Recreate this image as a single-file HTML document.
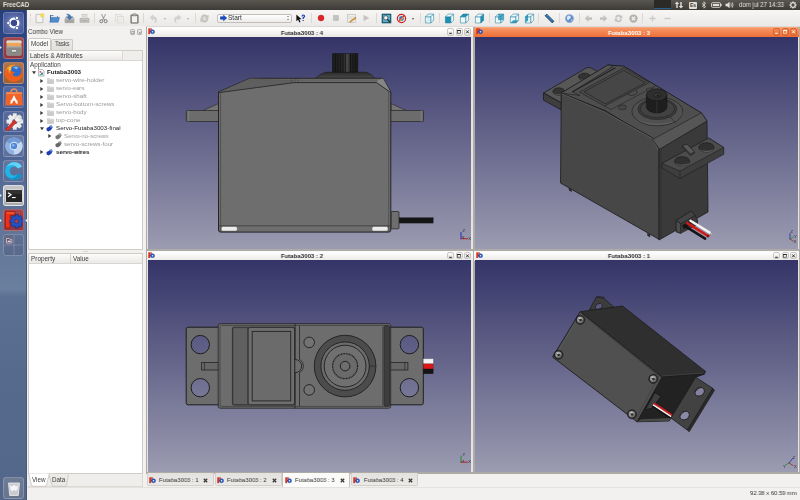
<!DOCTYPE html>
<html><head><meta charset="utf-8"><title>FreeCAD</title>
<style>
*{box-sizing:border-box;margin:0;padding:0}
html,body{width:800px;height:500px;overflow:hidden;background:#f2f1f0;font-family:"Liberation Sans","DejaVu Sans",sans-serif;font-size:7px;color:#3c3c3c}
.a{position:absolute}
.t{position:absolute;white-space:nowrap;will-change:transform;line-height:8px;height:8px;font-size:6.9px;transform-origin:0 50%}
#topbar{left:0;top:0;width:800px;height:10px;background:linear-gradient(#59574f,#3c3b37)}
#launcher{left:0;top:10px;width:27px;height:490px;background:linear-gradient(#233f7c 0%,#2f4b88 10%,#486093 25%,#5c7198 40%,#65799b 50%,#6a7e9e 57%,#5c7093 58.500%,#566a8d 75%,#53678a 100%);border-right:1px solid #4a5877}
#toolbar{left:27px;top:10px;width:773px;height:16px;background:linear-gradient(#f7f6f5,#ebe9e7)}
.li{position:absolute;left:2.5px;width:21.5px;height:21.5px;border-radius:3px;border:1px solid rgba(255,255,255,.2);overflow:hidden}
.sep{position:absolute;top:13px;width:1px;height:10px;background:#dcd9d5}
.tb{position:absolute;height:10px;background:linear-gradient(#ffffff,#eae8e6);font-weight:bold;font-size:6.4px;line-height:10px;color:#2c2c2c;border-top:1px solid #fafafa}
.tb span{will-change:transform}
.tb.act{background:linear-gradient(#f79766,#ee6e36);color:#fff;border-top:1px solid #f9a77c;border-radius:2px 2px 0 0}
.win{position:absolute;background:#e6e4e1;border:1px solid #aeaba6}
.view{position:absolute;background:linear-gradient(#343468,#9b9bb1)}
.wb{position:absolute;top:0.300px;width:7px;height:7.5px;border:1px solid #c9c6c2;border-radius:2px;background:linear-gradient(#fdfdfd,#e4e2df)}
.act .wb{border-color:#d9652f;background:linear-gradient(#f38a57,#ea6c35)}
</style></head><body>

<div id="topbar" class="a">
<span class="t" style="left:2.80px;top:0.80px;font-size:6.6px;color:#e6e2d9;font-weight:bold;transform:scaleX(0.9277);">FreeCAD</span>
<div class="a" style="left:654px;top:0;width:17px;height:9px;background:#2b2a27;border-bottom:1px solid #2b5f8f"></div>
<svg class="a" style="left:674px;top:1px" width="10" height="8" viewBox="0 0 10 8"><path d="M3 0.5 L0.8 3 H2.3 V7 H3.7 V3 H5.2Z M7 7.5 L4.8 5 H6.3 V1 H7.7 V5 H9.2Z" fill="#e3dfd6"/></svg>
<div class="a" style="left:689px;top:1.5px;width:8px;height:7px;background:#e3dfd6;border-radius:1px;color:#3c3b37;font-size:5px;line-height:7px;text-align:center;font-weight:bold">Es</div>
<svg class="a" style="left:701px;top:1px" width="6" height="8" viewBox="0 0 6 8"><path d="M1 2.3 L4.6 5.6 L3 7.2 V0.8 L4.6 2.4 L1 5.7" fill="none" stroke="#e3dfd6" stroke-width="0.8"/></svg>
<svg class="a" style="left:711px;top:2px" width="11" height="6" viewBox="0 0 11 6"><rect x="0.5" y="0.7" width="9" height="4.6" rx="1" fill="none" stroke="#e3dfd6" stroke-width="0.9"/><rect x="1.8" y="2" width="6.4" height="2" fill="#e3dfd6"/><rect x="9.6" y="2" width="1" height="2" fill="#e3dfd6"/></svg>
<svg class="a" style="left:725px;top:1px" width="10" height="8" viewBox="0 0 10 8"><path d="M0.5 2.8 H2.2 L4.6 0.8 V7.2 L2.2 5.2 H0.5Z" fill="#e3dfd6"/><path d="M5.8 2.3 Q7 4 5.8 5.7 M7.2 1.3 Q9 4 7.2 6.7" fill="none" stroke="#e3dfd6" stroke-width="0.8"/></svg>
<span class="t" style="left:739.00px;top:0.80px;font-size:6.3px;color:#e6e2d9;transform:scaleX(0.9660);">dom jul 27 14:33</span>
<svg class="a" style="left:789px;top:1px" width="8" height="8" viewBox="0 0 8 8"><circle cx="4" cy="4" r="2.3" fill="none" stroke="#e3dfd6" stroke-width="1.3"/><path d="M4 0.3V1.6M4 6.4V7.7M0.3 4H1.6M6.4 4H7.7M1.4 1.4L2.3 2.3M5.7 5.7L6.6 6.6M1.4 6.6L2.3 5.7M5.7 2.3L6.6 1.4" stroke="#e3dfd6" stroke-width="1"/></svg>
</div>
<div id="launcher" class="a">
<div class="li" style="top:2px;background:radial-gradient(circle at 50% 50%,#8494c4,#5466a4 60%,#43549a);"><svg width="20" height="20" viewBox="0 0 20 20"><circle cx="10" cy="10" r="4.300" fill="#39498c" stroke="#fff" stroke-width="2.300"/><g fill="#fff" stroke="#4a5b9e" stroke-width=".8"><circle cx="4.300" cy="10" r="1.700"/><circle cx="12.900" cy="5" r="1.700"/><circle cx="12.900" cy="15" r="1.700"/></g></svg></div>
<div class="li" style="top:27px;background:linear-gradient(#a4474f,#8c3741);"><svg width="20" height="20" viewBox="0 0 20 20"><rect x="2.500" y="2.500" width="15" height="15" rx="1.500" fill="#a9a8a4"/><rect x="2.500" y="2.500" width="15" height="3" rx="1" fill="#dedcd7"/><rect x="3.500" y="4.800" width="13" height="3.600" fill="#f3a356"/><rect x="2.500" y="8.400" width="15" height="9.100" rx="1" fill="#8b8a86"/><rect x="2.500" y="8.400" width="15" height="1" fill="#b5b4b0"/><rect x="7.300" y="11.600" width="5.400" height="2.400" rx="1.100" fill="#ececec" stroke="#5c5c5c" stroke-width=".6"/></svg></div>
<div class="li" style="top:52px;background:linear-gradient(#b0774a,#9c6038);"><svg width="20" height="20" viewBox="0 0 20 20"><defs><radialGradient id="fx" cx=".35" cy=".3" r=".8"><stop offset="0" stop-color="#f7b733"/><stop offset=".6" stop-color="#ea6a1c"/><stop offset="1" stop-color="#d9411a"/></radialGradient></defs><circle cx="9.800" cy="10.200" r="8.800" fill="url(#fx)"/><circle cx="11.800" cy="8" r="5.600" fill="#2c6ccf"/><path d="M9 4 Q12 2.600 15 4.500 Q13 5 12.500 6.500 Q10.500 5 9 4Z" fill="#7fb4ee"/><path d="M1.200 9 Q1.500 15.500 7 18.200 Q13 20 17 15.500 Q18.800 13 18.500 9.500 Q17.500 13.500 13 14 Q9 14 8.500 10.500 Q10.500 10.500 11 9 Q8 9.500 7 7 Q5.500 8.500 5.800 11 Q4 9 4.500 5.500 Q2 6.500 1.200 9Z" fill="#ee5f1c"/><path d="M4.500 5.500 Q5 8.500 7 7 Q8 5 6.800 3.200 Q5.300 4 4.500 5.500Z" fill="#f8c43a"/></svg></div>
<div class="li" style="top:76px;background:linear-gradient(#4f69a0,#46609a);"><svg width="20" height="20" viewBox="0 0 20 20"><path d="M7 5.500 Q7 2 10 2 Q13 2 13 5.500" fill="none" stroke="#f08a55" stroke-width="1.400"/><path d="M2 5.300 H18 L18.800 18.500 H1.200Z" fill="#f0642a"/><path d="M2 5.300 H18 L18.100 7 H1.900Z" fill="#f58a55"/><path d="M10 8 L6 16.500 H8 L10 12.200 L12 16.500 H14Z" fill="#fff"/><path d="M6.500 14.300 L10 12.800 L13.500 14.300" fill="none" stroke="#fff" stroke-width="1.100"/></svg></div>
<div class="li" style="top:100.5px;background:linear-gradient(#5a6c9c,#506294);"><svg width="20" height="20" viewBox="0 0 20 20"><g transform="translate(10.800 9.500)"><g fill="#e9e9e9"><rect x="-1.900" y="-8.300" width="3.800" height="16.600" rx=".6"/><rect x="-1.900" y="-8.300" width="3.800" height="16.600" rx=".6" transform="rotate(45)"/><rect x="-1.900" y="-8.300" width="3.800" height="16.600" rx=".6" transform="rotate(90)"/><rect x="-1.900" y="-8.300" width="3.800" height="16.600" rx=".6" transform="rotate(135)"/></g><circle r="6.300" fill="#ececec"/><circle r="2.600" fill="#5b6c9c"/></g><path d="M1.500 17.200 L10.500 7.800 L12.800 10 L3.800 19.300 Q2 19.800 1.500 17.200Z" fill="#d8332a" stroke="#8f1d18" stroke-width=".4"/><path d="M10.500 7.800 L12.500 4 Q14 2.500 16 3 L14.300 5.500 L15.800 7 L18 5.500 Q18.500 8 16.800 9.200 L12.800 10Z" fill="#f1f1f1" stroke="#9a9a9a" stroke-width=".4"/></svg></div>
<div class="li" style="top:125px;background:linear-gradient(#6b7ba6,#5f6f9b);"><svg width="20" height="20" viewBox="0 0 20 20"><circle cx="10" cy="10" r="8.600" fill="#a9c4e8"/><path d="M10 10 L2.600 5.700 A8.600 8.600 0 0 1 17.400 5.700Z" fill="#6f9bd8"/><path d="M10 10 L17.400 5.700 A8.600 8.600 0 0 1 10 18.600Z" fill="#c4d7f0"/><path d="M10 10 L10 18.600 A8.600 8.600 0 0 1 2.600 5.700Z" fill="#8fb2e2"/><circle cx="10" cy="10" r="4.300" fill="#e4edf8"/><circle cx="10" cy="10" r="3.300" fill="#4f86d6"/><circle cx="9.200" cy="9.200" r="1.300" fill="#8db4ea"/></svg></div>
<div class="li" style="top:150px;background:linear-gradient(#64769f,#596b95);"><svg width="20" height="20" viewBox="0 0 20 20"><path d="M18 5.500 A9 9 0 1 0 18 14.500 L14 12.500 A4.500 4.500 0 1 1 14 7.500Z" fill="#1fb4ea"/><path d="M18 5.500 A9 9 0 0 0 2.500 6 Q9 1.500 14 7.500Z" fill="#63d2f6"/><path d="M18 14.500 A9 9 0 0 1 3 15.500 Q10 20 14 12.500Z" fill="#1690c4"/></svg></div>
<div class="li" style="top:174.5px;background:linear-gradient(#c4c5c6,#a8a9aa);border-color:rgba(255,255,255,.6)"><svg width="20" height="20" viewBox="0 0 20 20"><rect x="1.500" y="3.500" width="17" height="13" rx="1.200" fill="#232323" stroke="#e4e4e4" stroke-width=".9"/><rect x="2" y="4" width="16" height="4" fill="#3a3a3a" opacity=".6"/><path d="M4 6.800 L7 8.800 L4 10.800" fill="none" stroke="#fff" stroke-width="1.200"/><rect x="8" y="11" width="3.600" height="1.100" fill="#fff"/></svg></div>
<div class="li" style="top:199px;background:linear-gradient(#a8434c,#903741);"><svg width="20" height="20" viewBox="0 0 20 20"><path d="M1.500 1.500 H11 V5.500 H6 V8 H10 V12 H6 V18 H1.500Z" fill="#ee3018" stroke="#7f170d" stroke-width=".6"/><path d="M2.300 2.300 H10.200 V3.500 H2.300Z" fill="#f8703a" opacity=".8"/><g transform="translate(12.600 11.300)"><g fill="#2052c8" stroke="#0d2a78" stroke-width=".6"><rect x="-1.500" y="-6.700" width="3" height="13.400"/><rect x="-1.500" y="-6.700" width="3" height="13.400" transform="rotate(45)"/><rect x="-1.500" y="-6.700" width="3" height="13.400" transform="rotate(90)"/><rect x="-1.500" y="-6.700" width="3" height="13.400" transform="rotate(135)"/></g><circle r="4.900" fill="#2052c8"/><circle r="2.200" fill="#a2414c" stroke="#0d2a78" stroke-width=".5"/></g></svg></div>
<div class="li" style="top:224px;background:linear-gradient(#5e6f93,#58698c);border-color:rgba(255,255,255,.22)"><svg width="20" height="20" viewBox="0 0 20 20"><rect x="0" y="0" width="10" height="10" fill="#6b6480" opacity=".55"/><path d="M10 0V20M0 10H20" stroke="rgba(255,255,255,.28)" stroke-width=".7"/><path d="M2.500 3.500 H5 L5.600 4.300 H7.800 V8 H2.500Z" fill="#5c4a5e" stroke="#e4dfe2" stroke-width=".7"/><rect x="3.600" y="5.600" width="3.200" height="1.400" fill="#e4dfe2"/></svg></div>
<div class="li" style="top:467px;background:linear-gradient(#6f7c95,#67748d);border-color:rgba(255,255,255,.2)"><svg width="20" height="20" viewBox="0 0 20 20"><path d="M4.5 5 H15.500 L14.300 17.500 H5.700Z" fill="#c9cbd0" stroke="#eef0f3" stroke-width=".8"/><path d="M6 7 l2 1.500 2-2 2 2 2-1.500 -.5 4 -1.500 2 -2-1 -2 1.500 -1.500-2Z" fill="#f4f5f7"/></svg></div>
<svg class="a" style="left:0;top:36.0px" width="2" height="3" viewBox="0 0 2 3"><path d="M0 0L1.800 1.500L0 3Z" fill="#e6e9f2"/></svg>
<svg class="a" style="left:0;top:61.0px" width="2" height="3" viewBox="0 0 2 3"><path d="M0 0L1.800 1.500L0 3Z" fill="#e6e9f2"/></svg>
<svg class="a" style="left:0;top:183.5px" width="2" height="3" viewBox="0 0 2 3"><path d="M0 0L1.800 1.500L0 3Z" fill="#e6e9f2"/></svg>
<svg class="a" style="left:0;top:208.5px" width="2" height="3" viewBox="0 0 2 3"><path d="M0 0L1.800 1.500L0 3Z" fill="#e6e9f2"/></svg>
<svg class="a" style="left:24.500px;top:208.500px" width="2" height="3" viewBox="0 0 2 3"><path d="M2 0L0.200 1.500L2 3Z" fill="#e6e9f2"/></svg>
</div>
<div id="toolbar" class="a"></div>
<div class="a" style="left:29.500px;top:14px;width:1px;height:8px;border-left:1px dotted #d6d3cf"></div>
<svg class="a" style="left:34.0px;top:12.5px" width="11" height="11" viewBox="0 0 16 16"><path d="M3 2 H11 L13 4 V14 H3Z" fill="#f4f3f0" stroke="#a9a7a2" stroke-width=".9"/><circle cx="12" cy="3.500" r="2.600" fill="#f5e34a" stroke="#d9c02a" stroke-width=".5"/></svg>
<svg class="a" style="left:48.5px;top:12.5px" width="11" height="11" viewBox="0 0 16 16"><path d="M1.500 3 H6 L7 4.500 H13 V13 H1.500Z" fill="#3f6ea8"/><path d="M3 4 H12 V8 H3Z" fill="#e9e9e6"/><path d="M1 13.500 L3 6.500 H15.500 L13.300 13.500Z" fill="#4f8bd0" stroke="#2d5d9c" stroke-width=".6"/></svg>
<svg class="a" style="left:63.5px;top:12.5px" width="11" height="11" viewBox="0 0 16 16"><path d="M1.500 9 L3.500 5 H12.500 L14.500 9 V14 H1.500Z" fill="#bdbcb8" stroke="#8a8985" stroke-width=".8"/><rect x="2.500" y="10" width="11" height="3" fill="#a3a29e"/><path d="M8 10 L4.500 6.200 H6.800 Q6.800 2.500 3.500 1.800 Q10 0.800 9.800 6.200 H11.800Z" fill="#3d78c4" stroke="#235a9e" stroke-width=".5"/></svg>
<svg class="a" style="left:78.5px;top:12.5px" width="11" height="11" viewBox="0 0 16 16"><path d="M1.500 8 H14.500 V13.500 H1.500Z" fill="#c9c8c4" stroke="#9b9a96" stroke-width=".8"/><rect x="4.500" y="2.500" width="7" height="5.500" fill="#f3f2ef" stroke="#a9a7a2" stroke-width=".7"/><path d="M6 4.300H10M6 6H10" stroke="#a9a7a2" stroke-width=".7"/><rect x="3.500" y="10.500" width="9" height="1.500" fill="#a9a8a4"/></svg>
<div class="sep" style="left:94px"></div>
<svg class="a" style="left:97.5px;top:12.5px" width="11" height="11" viewBox="0 0 16 16"><path d="M5 1.500 L9.500 10.500 M11 1.500 L6.500 10.500" stroke="#8a8a86" stroke-width="1.300"/><circle cx="4.800" cy="12" r="2.200" fill="none" stroke="#6f6f6b" stroke-width="1.300"/><circle cx="11.200" cy="12" r="2.200" fill="none" stroke="#6f6f6b" stroke-width="1.300"/></svg>
<svg class="a" style="left:113.5px;top:12.5px" width="11" height="11" viewBox="0 0 16 16"><rect x="2.500" y="2" width="8" height="9.500" fill="#f1f0ee" stroke="#d2d0cc" stroke-width=".8"/><rect x="5.500" y="5" width="8" height="9.500" fill="#f3f2f0" stroke="#cfcdc9" stroke-width=".8"/><path d="M7 8H12M7 10H12M7 12H11" stroke="#dcdad6" stroke-width=".7"/></svg>
<svg class="a" style="left:128.5px;top:12.5px" width="11" height="11" viewBox="0 0 16 16"><rect x="2.500" y="2.500" width="11" height="12.500" rx="1" fill="#8d8b86" stroke="#6d6b67" stroke-width=".8"/><rect x="4.200" y="4.500" width="7.600" height="9" fill="#f2f1ee"/><rect x="5.500" y="1" width="5" height="3" rx=".8" fill="#b9b7b2" stroke="#6d6b67" stroke-width=".6"/></svg>
<div class="sep" style="left:143px"></div>
<svg class="a" style="left:147.5px;top:12.5px" width="11" height="11" viewBox="0 0 16 16"><path d="M3 6.500 L7 2.500 V5 Q12.500 5 12.500 10 Q12.500 13 9.500 14 Q11 12 10.500 10 Q10 8 7 8 V10.500Z" fill="#d4d2ce" stroke="#c3c1bc" stroke-width=".6"/></svg>
<div class="a" style="left:163.500px;top:17.500px;border:1.600px solid transparent;border-top:2px solid #b0aea9"></div>
<svg class="a" style="left:171.5px;top:12.5px" width="11" height="11" viewBox="0 0 16 16"><path d="M13 6.500 L9 2.500 V5 Q3.500 5 3.500 10 Q3.500 13 6.500 14 Q5 12 5.500 10 Q6 8 9 8 V10.500Z" fill="#d4d2ce" stroke="#c3c1bc" stroke-width=".6"/></svg>
<div class="a" style="left:186.500px;top:17.500px;border:1.600px solid transparent;border-top:2px solid #b0aea9"></div>
<div class="sep" style="left:194.5px"></div>
<svg class="a" style="left:199.0px;top:12.5px" width="11" height="11" viewBox="0 0 16 16"><path d="M3 7 A5 5 0 0 1 12 4.500 L13.500 3 V8 H8.500 L10.300 6.200 A2.800 2.800 0 0 0 5.400 7Z M13 9 A5 5 0 0 1 4 11.500 L2.500 13 V8 H7.500 L5.700 9.800 A2.800 2.800 0 0 0 10.600 9Z" fill="#c9c7c3" stroke="#b1afaa" stroke-width=".5"/></svg>
<div class="a" style="left:217px;top:13.500px;width:75px;height:9.500px;border:1px solid #c2bfba;border-radius:2px;background:linear-gradient(#ffffff,#ecebe9)"></div>
<svg class="a" style="left:219.500px;top:15px" width="7" height="6" viewBox="0 0 7 6"><path d="M0.300 1.800 H3.500 V0.200 L6.800 3 L3.500 5.800 V4.200 H0.300Z" fill="#1c4fd0" stroke="#0b2c86" stroke-width=".5"/></svg>
<span class="t" style="left:227.50px;top:14.30px;font-size:6.3px;color:#2f2f2f;transform:scaleX(1.0372);">Start</span>
<div class="a" style="left:287px;top:15.300px;border:1.400px solid transparent;border-bottom:1.800px solid #444"></div>
<div class="a" style="left:287px;top:19.200px;border:1.400px solid transparent;border-top:1.800px solid #444"></div>
<svg class="a" style="left:295.0px;top:12.5px" width="11" height="11" viewBox="0 0 16 16"><path d="M2 2 L2 12 L4.500 9.800 L6.300 13.800 L8 13 L6.200 9.200 L9.500 9Z" fill="#111"/><path d="M9.500 5 Q9.500 2 12 2 Q14.800 2 14.800 4.600 Q14.800 6.300 12.800 7.200 V8.800 H11 V6.300 Q12.800 5.800 12.800 4.600 Q12.800 3.800 12 3.800 Q11.300 3.800 11.300 5Z M11 10 h1.800 v1.800 h-1.800Z" fill="#1d3fb8"/></svg>
<div class="sep" style="left:311px"></div>
<svg class="a" style="left:316.0px;top:13.0px" width="10" height="10" viewBox="0 0 16 16"><circle cx="8" cy="8" r="4.800" fill="#e02424" stroke="#b51515" stroke-width=".6"/></svg>
<svg class="a" style="left:331.0px;top:13.0px" width="10" height="10" viewBox="0 0 16 16"><rect x="3.800" y="3.800" width="8.400" height="8.400" fill="#c4c2be" stroke="#b2b0ab" stroke-width=".6"/></svg>
<svg class="a" style="left:345.5px;top:12.5px" width="11" height="11" viewBox="0 0 16 16"><rect x="2" y="2.500" width="12" height="11.500" fill="#f0efec" stroke="#b4b2ad" stroke-width=".8"/><path d="M3.500 5.500H12M3.500 8H9" stroke="#c9c7c2" stroke-width=".8"/><path d="M5 12.500 L13.500 6 L14.800 7.600 L6.400 13.600Z" fill="#e0a030" stroke="#8b5e1a" stroke-width=".5"/></svg>
<svg class="a" style="left:361.0px;top:13.0px" width="10" height="10" viewBox="0 0 16 16"><path d="M4.500 3.500 L12.500 8 L4.500 12.500Z" fill="#c6c4c0" stroke="#b4b2ad" stroke-width=".5"/></svg>
<div class="sep" style="left:376px"></div>
<svg class="a" style="left:380.5px;top:12.5px" width="11" height="11" viewBox="0 0 16 16"><rect x="1.500" y="1.500" width="13" height="13" fill="#1f6f8c" stroke="#0e4558" stroke-width=".9"/><rect x="3" y="3" width="10" height="10" fill="#5fb3cf"/><circle cx="7" cy="7" r="3.200" fill="#e8f4f8" stroke="#333" stroke-width="1"/><path d="M9.300 9.300 L13 13" stroke="#222" stroke-width="1.800"/></svg>
<svg class="a" style="left:395.5px;top:12.5px" width="11" height="11" viewBox="0 0 16 16"><circle cx="8" cy="8" r="6" fill="#ececec" stroke="#d32020" stroke-width="1.800"/><circle cx="8" cy="8" r="3.600" fill="#3a7bd0"/><path d="M3.500 12.500 L12.500 3.500" stroke="#d32020" stroke-width="1.800"/><path d="M5 11 L10.500 5.500 L11.500 6.500 L6 12Z" fill="#e9b93a"/></svg>
<div class="a" style="left:411.500px;top:17.500px;border:1.600px solid transparent;border-top:2px solid #555"></div>
<div class="sep" style="left:420px"></div>
<svg class="a" style="left:423.5px;top:12.5px" width="11" height="11" viewBox="0 0 16 16"><path d="M2 5.500 L10 5.500 L10 14.500 L2 14.500Z" fill="#eef8fb" stroke="#1d7f9c" stroke-width=".8"/><path d="M2 5.500 L6 1.500 L14 1.500 L10 5.500Z" fill="#eef8fb" stroke="#1d7f9c" stroke-width=".8"/><path d="M10 5.500 L14 1.500 L14 10.500 L10 14.500Z" fill="#eef8fb" stroke="#1d7f9c" stroke-width=".8"/><path d="M6 1.500V10.500H14M6 10.500L2 14.500" stroke="#7cc4d8" stroke-width=".6" fill="none"/></svg>
<div class="sep" style="left:439px"></div>
<svg class="a" style="left:443.5px;top:12.5px" width="11" height="11" viewBox="0 0 16 16"><path d="M2 5.500 L10 5.500 L10 14.500 L2 14.500Z" fill="#1d8fb0" stroke="#1d7f9c" stroke-width=".8"/><path d="M2 5.500 L6 1.500 L14 1.500 L10 5.500Z" fill="#eef8fb" stroke="#1d7f9c" stroke-width=".8"/><path d="M10 5.500 L14 1.500 L14 10.500 L10 14.500Z" fill="#eef8fb" stroke="#1d7f9c" stroke-width=".8"/></svg>
<svg class="a" style="left:458.5px;top:12.5px" width="11" height="11" viewBox="0 0 16 16"><path d="M2 5.500 L10 5.500 L10 14.500 L2 14.500Z" fill="#eef8fb" stroke="#1d7f9c" stroke-width=".8"/><path d="M2 5.500 L6 1.500 L14 1.500 L10 5.500Z" fill="#1d8fb0" stroke="#1d7f9c" stroke-width=".8"/><path d="M10 5.500 L14 1.500 L14 10.500 L10 14.500Z" fill="#eef8fb" stroke="#1d7f9c" stroke-width=".8"/></svg>
<svg class="a" style="left:473.5px;top:12.5px" width="11" height="11" viewBox="0 0 16 16"><path d="M2 5.500 L10 5.500 L10 14.500 L2 14.500Z" fill="#eef8fb" stroke="#1d7f9c" stroke-width=".8"/><path d="M2 5.500 L6 1.500 L14 1.500 L10 5.500Z" fill="#eef8fb" stroke="#1d7f9c" stroke-width=".8"/><path d="M10 5.500 L14 1.500 L14 10.500 L10 14.500Z" fill="#1d8fb0" stroke="#1d7f9c" stroke-width=".8"/></svg>
<div class="sep" style="left:489px"></div>
<svg class="a" style="left:493.5px;top:12.5px" width="11" height="11" viewBox="0 0 16 16"><path d="M2 5.500 L10 5.500 L10 14.500 L2 14.500Z" fill="#eef8fb" stroke="#1d7f9c" stroke-width=".8"/><path d="M2 5.500 L6 1.500 L14 1.500 L10 5.500Z" fill="#eef8fb" stroke="#1d7f9c" stroke-width=".8"/><path d="M10 5.500 L14 1.500 L14 10.500 L10 14.500Z" fill="#eef8fb" stroke="#1d7f9c" stroke-width=".8"/><path d="M6 1.500 H14 V10.500 H6Z" fill="#1d8fb0" opacity=".75"/></svg>
<svg class="a" style="left:508.5px;top:12.5px" width="11" height="11" viewBox="0 0 16 16"><path d="M2 5.500 L10 5.500 L10 14.500 L2 14.500Z" fill="#eef8fb" stroke="#1d7f9c" stroke-width=".8"/><path d="M2 5.500 L6 1.500 L14 1.500 L10 5.500Z" fill="#eef8fb" stroke="#1d7f9c" stroke-width=".8"/><path d="M10 5.500 L14 1.500 L14 10.500 L10 14.500Z" fill="#eef8fb" stroke="#1d7f9c" stroke-width=".8"/><path d="M2 14.500 L6 10.500 H14 L10 14.500Z" fill="#1d8fb0" opacity=".85"/></svg>
<svg class="a" style="left:523.5px;top:12.5px" width="11" height="11" viewBox="0 0 16 16"><path d="M2 5.500 L10 5.500 L10 14.500 L2 14.500Z" fill="#eef8fb" stroke="#1d7f9c" stroke-width=".8"/><path d="M2 5.500 L6 1.500 L14 1.500 L10 5.500Z" fill="#eef8fb" stroke="#1d7f9c" stroke-width=".8"/><path d="M10 5.500 L14 1.500 L14 10.500 L10 14.500Z" fill="#eef8fb" stroke="#1d7f9c" stroke-width=".8"/><path d="M2 5.500 L6 1.500 V10.500 L2 14.500Z" fill="#1d8fb0" opacity=".85"/></svg>
<div class="sep" style="left:538px"></div>
<svg class="a" style="left:543.5px;top:12.5px" width="11" height="11" viewBox="0 0 16 16"><path d="M1.500 4 L4 1.500 L14.500 12 L12 14.500Z" fill="#2c6fa8" stroke="#12304e" stroke-width=".9"/><path d="M4.500 4.500l1.200-1.200M6.500 6.500l1.200-1.200M8.500 8.500l1.200-1.200M10.500 10.500l1.200-1.200" stroke="#cfe3f5" stroke-width=".7"/></svg>
<div class="sep" style="left:559px"></div>
<svg class="a" style="left:563.5px;top:12.5px" width="11" height="11" viewBox="0 0 16 16"><circle cx="8" cy="8" r="6" fill="#5d8fd0" stroke="#a9b6c9" stroke-width=".9"/><path d="M4 6 Q6 3 9 4 Q11 6 9 8 Q7 9 6 11 Q4 9 4 6Z M10.500 9 Q12.500 9 12 11.500 Q10.500 12.500 10.500 9Z" fill="#dfe9f5"/></svg>
<div class="sep" style="left:579px"></div>
<svg class="a" style="left:582.5px;top:12.5px" width="11" height="11" viewBox="0 0 16 16"><path d="M2.500 8 L8 3 V6 H13 V10 H8 V13Z" fill="#c4c2be"/></svg>
<svg class="a" style="left:597.5px;top:12.5px" width="11" height="11" viewBox="0 0 16 16"><path d="M13.500 8 L8 3 V6 H3 V10 H8 V13Z" fill="#c4c2be"/></svg>
<svg class="a" style="left:612.5px;top:12.5px" width="11" height="11" viewBox="0 0 16 16"><path d="M3 7 A5 5 0 0 1 12 4.500 L13.500 3 V8 H8.500 L10.300 6.200 A2.800 2.800 0 0 0 5.400 7Z M13 9 A5 5 0 0 1 4 11.500 L2.500 13 V8 H7.500 L5.700 9.800 A2.800 2.800 0 0 0 10.600 9Z" fill="#c4c2be"/></svg>
<svg class="a" style="left:627.5px;top:12.5px" width="11" height="11" viewBox="0 0 16 16"><circle cx="8" cy="8" r="6" fill="#b3b1ad"/><path d="M5.500 5.500L10.500 10.500M10.500 5.500L5.500 10.500" stroke="#f4f3f1" stroke-width="1.800"/></svg>
<div class="sep" style="left:642px"></div>
<svg class="a" style="left:646.5px;top:12.5px" width="11" height="11" viewBox="0 0 16 16"><path d="M8 3.500V12.500M3.500 8H12.500" stroke="#cbc9c5" stroke-width="2"/></svg>
<svg class="a" style="left:661.5px;top:12.5px" width="11" height="11" viewBox="0 0 16 16"><path d="M3.500 8H12.500" stroke="#cbc9c5" stroke-width="2"/></svg><span class="t" style="left:28.20px;top:28.20px;font-size:6.4px;color:#3c3c3c;transform:scaleX(0.9622);">Combo View</span>
<div class="a" style="left:129.5px;top:29.300px;width:5.800px;height:5.800px;border:0.800px solid #b3b1ad;border-radius:1.200px;background:#eeedeb"></div>
<div class="a" style="left:136.5px;top:29.300px;width:5.800px;height:5.800px;border:0.800px solid #b3b1ad;border-radius:1.200px;background:#eeedeb"></div>
<svg class="a" style="left:129.500px;top:29.500px" width="5.500" height="5.500" viewBox="0 0 5.500 5.500"><rect x="1.800" y="1.600" width="2" height="2.200" fill="none" stroke="#8f8d89" stroke-width=".6"/></svg>
<svg class="a" style="left:136.500px;top:29.500px" width="5.500" height="5.500" viewBox="0 0 5.500 5.500"><path d="M1.600 1.600L3.900 3.900M3.900 1.600L1.600 3.900" stroke="#8a8884" stroke-width=".8"/></svg>
<div class="a" style="left:51px;top:39.200px;width:21.800px;height:11px;border:1px solid #cdcac6;border-bottom:none;border-radius:2px 2px 0 0;background:linear-gradient(#ecebe9,#e2e0dd)"></div>
<div class="a" style="left:28.300px;top:37.700px;width:23px;height:13px;border:1px solid #cdcac6;border-bottom:none;border-radius:2px 2px 0 0;background:linear-gradient(#fbfbfa,#f4f3f2)"></div>
<span class="t" style="left:30.75px;top:39.90px;font-size:6.3px;color:#3c3c3c;transform:scaleX(0.9878);">Model</span>
<span class="t" style="left:55.20px;top:39.90px;font-size:6.3px;color:#3c3c3c;transform:scaleX(0.8880);">Tasks</span>
<div class="a" style="left:28px;top:50px;width:115px;height:199.500px;background:#fff;border:1px solid #cfccc8"></div>
<div class="a" style="left:29px;top:51px;width:113px;height:9.500px;background:linear-gradient(#fcfcfb,#ebe9e7);border-bottom:1px solid #d9d6d2"></div>
<div class="a" style="left:122px;top:51px;width:20px;height:9.500px;background:#efeeec;border-left:1px solid #dcd9d5;border-bottom:1px solid #d9d6d2"></div>
<span class="t" style="left:30.00px;top:52.00px;font-size:6.3px;color:#3c3c3c;transform:scaleX(1.0051);">Labels &amp; Attributes</span>
<span class="t" style="left:30.00px;top:60.60px;font-size:6.3px;color:#3c3c3c;transform:scaleX(0.9977);">Application</span>
<svg class="a" style="left:31.5px;top:71.3px" width="4" height="3.500" viewBox="0 0 4 3.500"><path d="M0 0.300H4L2 3.300Z" fill="#3a3a3a"/></svg>
<svg class="a" style="left:38px;top:69px" width="6.500" height="7.500" viewBox="0 0 6.500 7.500"><path d="M0.500 0.400H4.400L6 2V7.100H0.500Z" fill="#fbfbfb" stroke="#8c8c8c" stroke-width=".6"/><rect x="1.600" y="2.200" width="1.600" height="1.400" fill="#d33"/><rect x="3.200" y="3.600" width="1.600" height="1.400" fill="#35b"/><rect x="1.600" y="5" width="3.200" height="1.200" fill="#3b8"/></svg>
<span class="t" style="left:47.00px;top:68.40px;font-size:6.2px;color:#222;font-weight:bold;transform:scaleX(0.9966);">Futaba3003</span>
<svg class="a" style="left:40.0px;top:78.8px" width="3.500" height="4" viewBox="0 0 3.500 4"><path d="M0.300 0V4L3.300 2Z" fill="#3a3a3a"/></svg>
<svg class="a" style="left:46.7px;top:77.8px" width="7" height="6" viewBox="0 0 7 6"><path d="M0.300 0.600H2.800L3.400 1.300H6.700V5.700H0.300Z" fill="#dddcda" stroke="#bdbbb8" stroke-width=".5"/><rect x="0.600" y="2.200" width="5.800" height="3.200" fill="#cccbc9"/></svg>
<span class="t" style="left:55.50px;top:76.40px;font-size:6.2px;color:#9a9a9a;transform:scaleX(1.0105);">servo-wire-holder</span>
<svg class="a" style="left:40.0px;top:86.75px" width="3.500" height="4" viewBox="0 0 3.500 4"><path d="M0.300 0V4L3.300 2Z" fill="#3a3a3a"/></svg>
<svg class="a" style="left:46.7px;top:85.75px" width="7" height="6" viewBox="0 0 7 6"><path d="M0.300 0.600H2.800L3.400 1.300H6.700V5.700H0.300Z" fill="#dddcda" stroke="#bdbbb8" stroke-width=".5"/><rect x="0.600" y="2.200" width="5.800" height="3.200" fill="#cccbc9"/></svg>
<span class="t" style="left:55.50px;top:84.35px;font-size:6.2px;color:#9a9a9a;transform:scaleX(0.9697);">servo-ears</span>
<svg class="a" style="left:40.0px;top:94.7px" width="3.500" height="4" viewBox="0 0 3.500 4"><path d="M0.300 0V4L3.300 2Z" fill="#3a3a3a"/></svg>
<svg class="a" style="left:46.7px;top:93.7px" width="7" height="6" viewBox="0 0 7 6"><path d="M0.300 0.600H2.800L3.400 1.300H6.700V5.700H0.300Z" fill="#dddcda" stroke="#bdbbb8" stroke-width=".5"/><rect x="0.600" y="2.200" width="5.800" height="3.200" fill="#cccbc9"/></svg>
<span class="t" style="left:55.50px;top:92.30px;font-size:6.2px;color:#9a9a9a;transform:scaleX(0.9945);">servo-shaft</span>
<svg class="a" style="left:40.0px;top:102.65px" width="3.500" height="4" viewBox="0 0 3.500 4"><path d="M0.300 0V4L3.300 2Z" fill="#3a3a3a"/></svg>
<svg class="a" style="left:46.7px;top:101.65px" width="7" height="6" viewBox="0 0 7 6"><path d="M0.300 0.600H2.800L3.400 1.300H6.700V5.700H0.300Z" fill="#dddcda" stroke="#bdbbb8" stroke-width=".5"/><rect x="0.600" y="2.200" width="5.800" height="3.200" fill="#cccbc9"/></svg>
<span class="t" style="left:55.50px;top:100.25px;font-size:6.2px;color:#9a9a9a;transform:scaleX(0.9971);">Servo-bottom-screws</span>
<svg class="a" style="left:40.0px;top:110.6px" width="3.500" height="4" viewBox="0 0 3.500 4"><path d="M0.300 0V4L3.300 2Z" fill="#3a3a3a"/></svg>
<svg class="a" style="left:46.7px;top:109.6px" width="7" height="6" viewBox="0 0 7 6"><path d="M0.300 0.600H2.800L3.400 1.300H6.700V5.700H0.300Z" fill="#dddcda" stroke="#bdbbb8" stroke-width=".5"/><rect x="0.600" y="2.200" width="5.800" height="3.200" fill="#cccbc9"/></svg>
<span class="t" style="left:55.50px;top:108.20px;font-size:6.2px;color:#9a9a9a;transform:scaleX(0.9977);">servo-body</span>
<svg class="a" style="left:40.0px;top:118.55px" width="3.500" height="4" viewBox="0 0 3.500 4"><path d="M0.300 0V4L3.300 2Z" fill="#3a3a3a"/></svg>
<svg class="a" style="left:46.7px;top:117.55px" width="7" height="6" viewBox="0 0 7 6"><path d="M0.300 0.600H2.800L3.400 1.300H6.700V5.700H0.300Z" fill="#dddcda" stroke="#bdbbb8" stroke-width=".5"/><rect x="0.600" y="2.200" width="5.800" height="3.200" fill="#cccbc9"/></svg>
<span class="t" style="left:55.50px;top:116.15px;font-size:6.2px;color:#9a9a9a;transform:scaleX(1.0154);">top-cone</span>
<svg class="a" style="left:39.7px;top:126.80000000000001px" width="4" height="3.500" viewBox="0 0 4 3.500"><path d="M0 0.300H4L2 3.300Z" fill="#3a3a3a"/></svg>
<svg class="a" style="left:46.0px;top:124.80000000000001px" width="7" height="7" viewBox="0 0 7 7"><path d="M0.500 3 L3.200 1.800 L3.600 0.800 L6 0.400 L6.600 2.600 L5 5 L2.600 6.600 L0.600 5.400Z" fill="#1a3fb4"/><path d="M3.600 0.900 L5.800 0.600 L6.200 2.400 L4.400 2.600Z" fill="#6f8fe0"/></svg>
<span class="t" style="left:55.50px;top:123.90px;font-size:6.2px;color:#222;transform:scaleX(0.9954);">Servo-Futaba3003-final</span>
<svg class="a" style="left:48.3px;top:134.3px" width="3.500" height="4" viewBox="0 0 3.500 4"><path d="M0.300 0V4L3.300 2Z" fill="#3a3a3a"/></svg>
<svg class="a" style="left:54.5px;top:132.8px" width="7" height="7" viewBox="0 0 7 7"><path d="M0.500 3 L3.200 1.800 L3.600 0.800 L6 0.400 L6.600 2.600 L5 5 L2.600 6.600 L0.600 5.400Z" fill="#777"/><path d="M3.600 0.900 L5.800 0.600 L6.200 2.400 L4.400 2.600Z" fill="#aaa"/></svg>
<span class="t" style="left:64.00px;top:131.90px;font-size:6.2px;color:#9a9a9a;transform:scaleX(0.9621);">Servo-no-screws</span>
<svg class="a" style="left:54.5px;top:140.8px" width="7" height="7" viewBox="0 0 7 7"><path d="M0.500 3 L3.200 1.800 L3.600 0.800 L6 0.400 L6.600 2.600 L5 5 L2.600 6.600 L0.600 5.400Z" fill="#666"/><path d="M3.600 0.900 L5.800 0.600 L6.200 2.400 L4.400 2.600Z" fill="#999"/></svg>
<span class="t" style="left:64.00px;top:139.90px;font-size:6.2px;color:#9a9a9a;transform:scaleX(0.9946);">servo-screws-four</span>
<svg class="a" style="left:40.0px;top:150.2px" width="3.500" height="4" viewBox="0 0 3.500 4"><path d="M0.300 0V4L3.300 2Z" fill="#3a3a3a"/></svg>
<svg class="a" style="left:46.0px;top:148.7px" width="7" height="7" viewBox="0 0 7 7"><path d="M0.500 3 L3.200 1.800 L3.600 0.800 L6 0.400 L6.600 2.600 L5 5 L2.600 6.600 L0.600 5.400Z" fill="#1a3fb4"/><path d="M3.600 0.900 L5.800 0.600 L6.200 2.400 L4.400 2.600Z" fill="#6f8fe0"/></svg>
<span class="t" style="left:55.50px;top:147.80px;font-size:6.2px;color:#222;font-weight:bold;transform:scaleX(0.9720);">servo-wires</span>
<div class="a" style="left:83px;top:250.500px;width:5px;height:1px;background:#dcd9d5"></div>
<div class="a" style="left:28px;top:252.500px;width:115px;height:221px;background:#fff;border:1px solid #cfccc8"></div>
<div class="a" style="left:29px;top:253.500px;width:113px;height:10px;background:linear-gradient(#fcfcfb,#ebe9e7);border-bottom:1px solid #d9d6d2"></div>
<div class="a" style="left:70.300px;top:253.500px;width:1px;height:10px;background:#d5d2ce"></div>
<span class="t" style="left:30.75px;top:255.20px;font-size:6.3px;color:#3c3c3c;transform:scaleX(1.0185);">Property</span>
<span class="t" style="left:72.50px;top:255.20px;font-size:6.3px;color:#3c3c3c;transform:scaleX(0.9907);">Value</span>
<div class="a" style="left:28px;top:473.500px;width:115px;height:13.300px;background:#efeeec;border-right:1px solid #dddad6;border-bottom:1px solid #dddad6"></div>
<svg class="a" style="left:28px;top:473px" width="60" height="14" viewBox="0 0 60 14"><path d="M20.500 0.500 L24 12 Q24.500 13.300 26 13.300 H36.500 Q38 13.300 38.500 12 L40.500 1.500" fill="#eceae7" stroke="#b9b6b1" stroke-width=".6"/><path d="M0.500 0 L3.500 12 Q4 13.300 5.500 13.300 H16.500 Q18 13.300 18.500 12 L21.500 0Z" fill="#fff" stroke="#b9b6b1" stroke-width=".6"/></svg>
<span class="t" style="left:31.75px;top:476.20px;font-size:6.3px;color:#3c3c3c;transform:scaleX(0.9784);">View</span>
<span class="t" style="left:52.00px;top:476.20px;font-size:6.3px;color:#3c3c3c;transform:scaleX(0.9769);">Data</span>
<div class="a" style="left:146px;top:26px;width:654px;height:446px;background:#dcd9d5"></div>
<div class="win" style="left:146px;top:26.5px;width:327.5px;height:223px"></div>
<div class="tb" style="left:146.5px;top:27.0px;width:326.5px"><svg class="a" style="left:1.500px;top:0.400px" width="7.300" height="6.500" viewBox="0 0 9 8"><path d="M0.500 0.500H4.500V2.300H2.400V3.400H4V5.200H2.400V7.500H0.500Z" fill="#e5301c" stroke="#9a1d10" stroke-width=".3"/><circle cx="5.600" cy="4.600" r="2.600" fill="#2458c8" stroke="#10307e" stroke-width=".4"/><circle cx="5.600" cy="4.600" r="1" fill="#e9edf8"/></svg>
<span class="a" style="left:115.75px;width:80px;top:-0.500px;text-align:center;font-size:6.2px;transform:scaleX(0.98)">Futaba3003 : 4</span>
<div class="wb" style="left:300.5px"></div>
<div class="wb" style="left:309.0px"></div>
<div class="wb" style="left:317.5px"></div>
<svg class="a" style="left:300.5px;top:0.300px" width="24" height="7.500" viewBox="0 0 24 7.500"><path d="M2.200 5.300H4.800" stroke="#222" stroke-width="1"/><rect x="10.600" y="2.400" width="2.800" height="2.800" fill="none" stroke="#222" stroke-width=".6"/><path d="M10.400 2.500H13.600" stroke="#222" stroke-width="1"/><path d="M19.200 2.400L21.800 5.200M21.800 2.400L19.200 5.200" stroke="#222" stroke-width=".9"/></svg>
</div>
<div class="view" style="left:147.8px;top:36.5px;width:323.3px;height:212px" id="v4"></div>
<div class="win" style="left:473.6px;top:26.5px;width:326.4px;height:223px"></div>
<div class="tb act" style="left:474.1px;top:27.0px;width:325.4px"><svg class="a" style="left:1.500px;top:0.400px" width="7.300" height="6.500" viewBox="0 0 9 8"><path d="M0.500 0.500H4.500V2.300H2.400V3.400H4V5.200H2.400V7.500H0.500Z" fill="#e5301c" stroke="#9a1d10" stroke-width=".3"/><circle cx="5.600" cy="4.600" r="2.600" fill="#2458c8" stroke="#10307e" stroke-width=".4"/><circle cx="5.600" cy="4.600" r="1" fill="#e9edf8"/></svg>
<span class="a" style="left:115.19999999999993px;width:80px;top:-0.500px;text-align:center;font-size:6.2px;transform:scaleX(0.98)">Futaba3003 : 3</span>
<div class="wb" style="left:299.4px"></div>
<div class="wb" style="left:307.9px"></div>
<div class="wb" style="left:316.4px"></div>
<svg class="a" style="left:299.4px;top:0.300px" width="24" height="7.500" viewBox="0 0 24 7.500"><path d="M2.200 5.300H4.800" stroke="#fff" stroke-width="1"/><rect x="10.600" y="2.400" width="2.800" height="2.800" fill="none" stroke="#fff" stroke-width=".6"/><path d="M10.400 2.500H13.600" stroke="#fff" stroke-width="1"/><path d="M19.200 2.400L21.800 5.200M21.800 2.400L19.200 5.200" stroke="#fff" stroke-width=".9"/></svg>
</div>
<div class="view" style="left:474.7px;top:36.5px;width:323.3px;height:212px" id="v3"></div>
<div class="win" style="left:146px;top:250px;width:327.5px;height:223px"></div>
<div class="tb" style="left:146.5px;top:250.5px;width:326.5px"><svg class="a" style="left:1.500px;top:0.400px" width="7.300" height="6.500" viewBox="0 0 9 8"><path d="M0.500 0.500H4.500V2.300H2.400V3.400H4V5.200H2.400V7.500H0.500Z" fill="#e5301c" stroke="#9a1d10" stroke-width=".3"/><circle cx="5.600" cy="4.600" r="2.600" fill="#2458c8" stroke="#10307e" stroke-width=".4"/><circle cx="5.600" cy="4.600" r="1" fill="#e9edf8"/></svg>
<span class="a" style="left:115.75px;width:80px;top:-0.500px;text-align:center;font-size:6.2px;transform:scaleX(0.98)">Futaba3003 : 2</span>
<div class="wb" style="left:300.5px"></div>
<div class="wb" style="left:309.0px"></div>
<div class="wb" style="left:317.5px"></div>
<svg class="a" style="left:300.5px;top:0.300px" width="24" height="7.500" viewBox="0 0 24 7.500"><path d="M2.200 5.300H4.800" stroke="#222" stroke-width="1"/><rect x="10.600" y="2.400" width="2.800" height="2.800" fill="none" stroke="#222" stroke-width=".6"/><path d="M10.400 2.500H13.600" stroke="#222" stroke-width="1"/><path d="M19.200 2.400L21.800 5.200M21.800 2.400L19.200 5.200" stroke="#222" stroke-width=".9"/></svg>
</div>
<div class="view" style="left:147.8px;top:260px;width:323.3px;height:211.6px" id="v2"></div>
<div class="win" style="left:473.6px;top:250px;width:326.4px;height:223px"></div>
<div class="tb" style="left:474.1px;top:250.5px;width:325.4px"><svg class="a" style="left:1.500px;top:0.400px" width="7.300" height="6.500" viewBox="0 0 9 8"><path d="M0.500 0.500H4.500V2.300H2.400V3.400H4V5.200H2.400V7.500H0.500Z" fill="#e5301c" stroke="#9a1d10" stroke-width=".3"/><circle cx="5.600" cy="4.600" r="2.600" fill="#2458c8" stroke="#10307e" stroke-width=".4"/><circle cx="5.600" cy="4.600" r="1" fill="#e9edf8"/></svg>
<span class="a" style="left:115.19999999999993px;width:80px;top:-0.500px;text-align:center;font-size:6.2px;transform:scaleX(0.98)">Futaba3003 : 1</span>
<div class="wb" style="left:299.4px"></div>
<div class="wb" style="left:307.9px"></div>
<div class="wb" style="left:316.4px"></div>
<svg class="a" style="left:299.4px;top:0.300px" width="24" height="7.500" viewBox="0 0 24 7.500"><path d="M2.200 5.300H4.800" stroke="#222" stroke-width="1"/><rect x="10.600" y="2.400" width="2.800" height="2.800" fill="none" stroke="#222" stroke-width=".6"/><path d="M10.400 2.500H13.600" stroke="#222" stroke-width="1"/><path d="M19.200 2.400L21.800 5.200M21.800 2.400L19.200 5.200" stroke="#222" stroke-width=".9"/></svg>
</div>
<div class="view" style="left:474.7px;top:260px;width:323.3px;height:211.6px" id="v1"></div>
<div class="a" style="left:146px;top:472.800px;width:654px;height:1px;background:#aeaba6"></div>
<div class="a" style="left:147px;top:473px;width:67px;height:12.500px;background:linear-gradient(#e4e2df,#eceae8);border:1px solid #d2cfcb;border-top:none;border-radius:0 0 2px 2px"></div>
<div class="a" style="left:147px;top:476px;width:10px;height:9px"><svg class="a" style="left:1.500px;top:1.300px" width="7.300" height="6.500" viewBox="0 0 9 8"><path d="M0.500 0.500H4.500V2.300H2.400V3.400H4V5.200H2.400V7.500H0.500Z" fill="#e5301c" stroke="#9a1d10" stroke-width=".3"/><circle cx="5.600" cy="4.600" r="2.600" fill="#2458c8" stroke="#10307e" stroke-width=".4"/><circle cx="5.600" cy="4.600" r="1" fill="#e9edf8"/></svg></div>
<span class="t" style="left:159.00px;top:476.40px;font-size:6.2px;color:#333;transform:scaleX(0.9494);">Futaba3003 : 1</span>
<svg class="a" style="left:203.4px;top:478px" width="5" height="5" viewBox="0 0 5 5"><path d="M0.800 0.800L4.200 4.200M4.200 0.800L0.800 4.200" stroke="#3a3a3a" stroke-width="1.300"/></svg>
<div class="a" style="left:214.5px;top:473px;width:67.5px;height:12.500px;background:linear-gradient(#e4e2df,#eceae8);border:1px solid #d2cfcb;border-top:none;border-radius:0 0 2px 2px"></div>
<div class="a" style="left:215px;top:476px;width:10px;height:9px"><svg class="a" style="left:1.500px;top:1.300px" width="7.300" height="6.500" viewBox="0 0 9 8"><path d="M0.500 0.500H4.500V2.300H2.400V3.400H4V5.200H2.400V7.500H0.500Z" fill="#e5301c" stroke="#9a1d10" stroke-width=".3"/><circle cx="5.600" cy="4.600" r="2.600" fill="#2458c8" stroke="#10307e" stroke-width=".4"/><circle cx="5.600" cy="4.600" r="1" fill="#e9edf8"/></svg></div>
<span class="t" style="left:227.00px;top:476.40px;font-size:6.2px;color:#333;transform:scaleX(0.9494);">Futaba3003 : 2</span>
<svg class="a" style="left:271.8px;top:478px" width="5" height="5" viewBox="0 0 5 5"><path d="M0.800 0.800L4.200 4.200M4.200 0.800L0.800 4.200" stroke="#3a3a3a" stroke-width="1.300"/></svg>
<div class="a" style="left:282.4px;top:472.500px;width:68.0px;height:15px;background:#fbfbfa;border:1px solid #c5c2bd;border-top:none;border-radius:0 0 2px 2px"></div>
<div class="a" style="left:283px;top:476px;width:10px;height:9px"><svg class="a" style="left:1.500px;top:1.300px" width="7.300" height="6.500" viewBox="0 0 9 8"><path d="M0.500 0.500H4.500V2.300H2.400V3.400H4V5.200H2.400V7.500H0.500Z" fill="#e5301c" stroke="#9a1d10" stroke-width=".3"/><circle cx="5.600" cy="4.600" r="2.600" fill="#2458c8" stroke="#10307e" stroke-width=".4"/><circle cx="5.600" cy="4.600" r="1" fill="#e9edf8"/></svg></div>
<span class="t" style="left:295.00px;top:476.40px;font-size:6.2px;color:#333;transform:scaleX(0.9494);">Futaba3003 : 3</span>
<svg class="a" style="left:340.2px;top:478px" width="5" height="5" viewBox="0 0 5 5"><path d="M0.800 0.800L4.200 4.200M4.200 0.800L0.800 4.200" stroke="#3a3a3a" stroke-width="1.300"/></svg>
<div class="a" style="left:350.8px;top:473px;width:67.59999999999997px;height:12.500px;background:linear-gradient(#e4e2df,#eceae8);border:1px solid #d2cfcb;border-top:none;border-radius:0 0 2px 2px"></div>
<div class="a" style="left:351.7px;top:476px;width:10px;height:9px"><svg class="a" style="left:1.500px;top:1.300px" width="7.300" height="6.500" viewBox="0 0 9 8"><path d="M0.500 0.500H4.500V2.300H2.400V3.400H4V5.200H2.400V7.500H0.500Z" fill="#e5301c" stroke="#9a1d10" stroke-width=".3"/><circle cx="5.600" cy="4.600" r="2.600" fill="#2458c8" stroke="#10307e" stroke-width=".4"/><circle cx="5.600" cy="4.600" r="1" fill="#e9edf8"/></svg></div>
<span class="t" style="left:364.00px;top:476.40px;font-size:6.2px;color:#333;transform:scaleX(0.9494);">Futaba3003 : 4</span>
<svg class="a" style="left:408.2px;top:478px" width="5" height="5" viewBox="0 0 5 5"><path d="M0.800 0.800L4.200 4.200M4.200 0.800L0.800 4.200" stroke="#3a3a3a" stroke-width="1.300"/></svg>
<div class="a" style="left:27px;top:487px;width:773px;height:1px;background:#e4e2df"></div>
<span class="t" style="left:750.00px;top:489.20px;font-size:6.1px;color:#333;transform:scaleX(0.9585);">92.38 x 60.59 mm</span><svg class="a" style="left:148px;top:36.5px" width="323" height="212" viewBox="148 36.5 323 212" font-family="Liberation Sans,sans-serif">
<defs><linearGradient id="sh" x1="0" x2="1" y1="0" y2="0"><stop offset="0" stop-color="#1a1a1a"/><stop offset=".45" stop-color="#2a2a2a"/><stop offset=".58" stop-color="#4a4a4a"/><stop offset=".7" stop-color="#242424"/><stop offset="1" stop-color="#1a1a1a"/></linearGradient><linearGradient id="cn" x1="0" x2="0" y1="0" y2="1"><stop offset="0" stop-color="#2a2a2a"/><stop offset="1" stop-color="#4a4a4a"/></linearGradient></defs>
<rect x="186.3" y="110" width="237.2" height="11" rx="1" fill="#6c6c6c" stroke="#2a2a2a" stroke-width="0.78" />
<polyline points="188.60,110.30 188.60,120.70" fill="none" stroke="#888" stroke-width="0.6" stroke-linejoin="round" stroke-linecap="round" />
<polyline points="421.20,110.30 421.20,120.70" fill="none" stroke="#888" stroke-width="0.6" stroke-linejoin="round" stroke-linecap="round" />
<polygon points="203.00,110.00 218.50,103.00 218.50,110.00" fill="#747474" stroke="#2a2a2a" stroke-width="0.65" stroke-linejoin="round" />
<polygon points="406.50,110.00 391.00,103.00 391.00,110.00" fill="#747474" stroke="#2a2a2a" stroke-width="0.65" stroke-linejoin="round" />
<rect x="399" y="217.2" width="34.19999999999999" height="5.400000000000006" rx="0" fill="#151515" stroke="#111" stroke-width="0.3" />
<rect x="391" y="211" width="8" height="17.30000000000001" rx="0.8" fill="#6e6e6e" stroke="#2a2a2a" stroke-width="0.78" />
<path d="M315.5 77.8 Q320 73 326 71.6 H366 Q371 73 375.2 77.8Z" fill="url(#cn)" stroke="#1c1c1c" stroke-width=".5"/>
<rect x="332.3" y="53.1" width="25.599999999999966" height="18.499999999999993" rx="0" fill="url(#sh)" stroke="#161616" stroke-width="0.52" />
<polyline points="335.50,53.50 335.50,71.30" fill="none" stroke="#101010" stroke-width="0.65" stroke-linejoin="round" stroke-linecap="round" />
<polyline points="338.00,53.50 338.00,71.30" fill="none" stroke="#101010" stroke-width="0.65" stroke-linejoin="round" stroke-linecap="round" />
<polyline points="340.50,53.50 340.50,71.30" fill="none" stroke="#101010" stroke-width="0.65" stroke-linejoin="round" stroke-linecap="round" />
<polyline points="343.00,53.50 343.00,71.30" fill="none" stroke="#101010" stroke-width="0.65" stroke-linejoin="round" stroke-linecap="round" />
<polyline points="345.50,53.50 345.50,71.30" fill="none" stroke="#101010" stroke-width="0.65" stroke-linejoin="round" stroke-linecap="round" />
<polyline points="350.50,53.50 350.50,71.30" fill="none" stroke="#101010" stroke-width="0.65" stroke-linejoin="round" stroke-linecap="round" />
<polyline points="353.00,53.50 353.00,71.30" fill="none" stroke="#101010" stroke-width="0.65" stroke-linejoin="round" stroke-linecap="round" />
<polyline points="355.50,53.50 355.50,71.30" fill="none" stroke="#101010" stroke-width="0.65" stroke-linejoin="round" stroke-linecap="round" />
<path d="M218.500 91.500 L250 77.800 H383 L390.800 91.500 V229.500 Q390.800 231.600 388.700 231.600 H220.600 Q218.500 231.600 218.500 229.500Z" fill="#6e6e6e" stroke="#202020" stroke-width=".95" stroke-linejoin="round"/>
<polygon points="218.70,91.70 250.00,78.00 383.00,78.00 390.60,91.50 376.60,82.00 294.00,82.00" fill="#6b6b6b" stroke="#2a2a2a" stroke-width="0.65" stroke-linejoin="round" />
<polygon points="218.70,91.70 250.00,78.00 294.00,79.80 294.00,82.00" fill="#5f5f5f" stroke="none" stroke-width="0" stroke-linejoin="round" />
<polygon points="383.00,78.00 390.60,91.50 376.60,82.00 378.00,79.80" fill="#868686" stroke="none" stroke-width="0" stroke-linejoin="round" />
<polyline points="248.00,79.50 294.00,79.80 376.00,79.80" fill="none" stroke="#5a5a5a" stroke-width="0.65" stroke-linejoin="round" stroke-linecap="round" />
<polyline points="218.70,92.20 294.00,82.10 376.60,82.10 390.30,91.70" fill="none" stroke="#2a2a2a" stroke-width="0.78" stroke-linejoin="round" stroke-linecap="round" />
<polyline points="220.60,92.50 220.60,231.00" fill="none" stroke="#4a4a4a" stroke-width="0.78" stroke-linejoin="round" stroke-linecap="round" />
<polyline points="388.70,91.00 388.70,231.00" fill="none" stroke="#4a4a4a" stroke-width="0.78" stroke-linejoin="round" stroke-linecap="round" />
<polyline points="219.00,225.30 390.50,225.30" fill="none" stroke="#3a3a3a" stroke-width="0.78" stroke-linejoin="round" stroke-linecap="round" />
<polyline points="291.50,78.50 291.50,81.00" fill="none" stroke="#333" stroke-width="0.4" stroke-linejoin="round" stroke-linecap="round" />
<polyline points="295.00,78.50 295.00,81.00" fill="none" stroke="#333" stroke-width="0.4" stroke-linejoin="round" stroke-linecap="round" />
<polyline points="298.00,78.50 298.00,81.00" fill="none" stroke="#333" stroke-width="0.4" stroke-linejoin="round" stroke-linecap="round" />
<rect x="221.3" y="226" width="16.0" height="4.599999999999994" rx="1.6" fill="#ececec" stroke="#555" stroke-width="0.5" />
<rect x="372" y="226" width="16" height="4.599999999999994" rx="1.6" fill="#ececec" stroke="#555" stroke-width="0.5" />
<polyline points="461.00,232.00 461.00,238.20" fill="none" stroke="#1c2fb0" stroke-width="1.0" stroke-linejoin="round" stroke-linecap="round" />
<polyline points="461.00,238.20 467.50,238.20" fill="none" stroke="#b02020" stroke-width="1.0" stroke-linejoin="round" stroke-linecap="round" />
<text x="462.5" y="231.5" font-size="4.2" fill="#2a2a3a">Z</text>
<text x="468.2" y="239" font-size="4.2" fill="#2a2a3a">X</text>
<text x="462.3" y="237.6" font-size="4.2" fill="#2a2a3a">y</text>
</svg>
<svg class="a" style="left:148px;top:260px" width="323" height="211" viewBox="148 260 323 211" font-family="Liberation Sans,sans-serif">
<path d="M188.200 327.200 H421.300 Q423.300 327.200 423.300 329.200 V402.800 Q423.300 404.800 421.300 404.800 H188.200 Q186.200 404.800 186.200 402.800 V329.200 Q186.200 327.200 188.200 327.200Z M191.10000000000002 344.6 a9.2 9.2 0 1 0 18.4 0 a9.2 9.2 0 1 0 -18.4 0ZM191.10000000000002 387.7 a9.2 9.2 0 1 0 18.4 0 a9.2 9.2 0 1 0 -18.4 0ZM400.2 344.6 a9.2 9.2 0 1 0 18.4 0 a9.2 9.2 0 1 0 -18.4 0ZM400.2 387.7 a9.2 9.2 0 1 0 18.4 0 a9.2 9.2 0 1 0 -18.4 0Z" fill="#6d6d6d" fill-rule="evenodd" stroke="#1e1e1e" stroke-width="1"/>
<rect x="201.6" y="362.4" width="17.400000000000006" height="7.600000000000023" rx="0" fill="#666" stroke="#262626" stroke-width="0.81" />
<polyline points="204.50,362.60 204.50,369.80" fill="none" stroke="#262626" stroke-width="0.68" stroke-linejoin="round" stroke-linecap="round" />
<rect x="390" y="362.4" width="17.899999999999977" height="7.600000000000023" rx="0" fill="#666" stroke="#262626" stroke-width="0.81" />
<polyline points="404.80,362.60 404.80,369.80" fill="none" stroke="#262626" stroke-width="0.68" stroke-linejoin="round" stroke-linecap="round" />
<rect x="423.3" y="358.9" width="9.899999999999977" height="5.0" rx="0" fill="#f4f4f4" stroke="#888" stroke-width="0.3" />
<rect x="423.3" y="363.9" width="9.899999999999977" height="5.100000000000023" rx="0" fill="#d81818" stroke="#811" stroke-width="0.3" />
<rect x="423.3" y="369" width="9.899999999999977" height="4.800000000000011" rx="0" fill="#151515" stroke="#111" stroke-width="0.3" />
<rect x="218.2" y="323.7" width="172.5" height="84.5" rx="2" fill="#6d6d6d" stroke="#222" stroke-width="0.8" />
<rect x="220" y="325.5" width="169" height="80.89999999999998" rx="1.5" fill="none" stroke="#3a3a3a" stroke-width="0.68" />
<rect x="384.3" y="325.7" width="5.199999999999989" height="80.5" rx="1" fill="#3e3e3e" stroke="#262626" stroke-width="0.68" />
<polyline points="383.00,327.00 383.00,405.00" fill="none" stroke="#262626" stroke-width="0.81" stroke-linejoin="round" stroke-linecap="round" />
<rect x="232.4" y="327.2" width="62.400000000000006" height="77.80000000000001" rx="1.5" fill="#6a6a6a" stroke="#262626" stroke-width="0.81" />
<rect x="232.8" y="327.6" width="15.0" height="77.0" rx="1.5" fill="#606060" stroke="#2e2e2e" stroke-width="0.68" />
<rect x="248.2" y="327.4" width="46.400000000000034" height="77.40000000000003" rx="2" fill="#6e6e6e" stroke="#262626" stroke-width="0.81" />
<rect x="252.2" y="331.4" width="38.5" height="69.5" rx="0" fill="#6b6b6b" stroke="#262626" stroke-width="0.94" />
<polyline points="295.00,324.00 295.00,359.50" fill="none" stroke="#262626" stroke-width="0.94" stroke-linejoin="round" stroke-linecap="round" />
<polyline points="295.00,372.70 295.00,408.00" fill="none" stroke="#262626" stroke-width="0.94" stroke-linejoin="round" stroke-linecap="round" />
<polyline points="299.50,326.00 299.50,359.00" fill="none" stroke="#262626" stroke-width="0.81" stroke-linejoin="round" stroke-linecap="round" />
<polyline points="299.50,373.00 299.50,406.00" fill="none" stroke="#262626" stroke-width="0.81" stroke-linejoin="round" stroke-linecap="round" />
<path d="M295 359.500 A6.600 6.600 0 0 1 295 372.700" fill="none" stroke="#262626" stroke-width=".95"/>
<path d="M299.500 359 Q303.500 362 303.500 366 Q303.500 370 299.500 373" fill="none" stroke="#262626" stroke-width=".8"/>
<circle cx="309.200" cy="342.4" r="5.300" fill="#727272" stroke="#222" stroke-width=".95"/>
<circle cx="309.200" cy="389.9" r="5.300" fill="#727272" stroke="#222" stroke-width=".95"/>
<circle cx="345.1" cy="366.1" r="30.800" fill="#4c4c4c" stroke="#222" stroke-width=".95"/>
<circle cx="345.1" cy="366.1" r="24.200" fill="#6c6c6c" stroke="#222" stroke-width=".95"/>
<circle cx="345.1" cy="366.1" r="20.900" fill="#707070" stroke="#222" stroke-width=".95"/>
<circle cx="345.1" cy="366.1" r="12.500" fill="#6a6a6a" stroke="#1c1c1c" stroke-width="1.300" stroke-dasharray="1 .6"/>
<circle cx="345.1" cy="366.1" r="4.800" fill="#6e6e6e" stroke="#222" stroke-width="1"/>
<polyline points="369.50,366.10 375.90,366.10" fill="none" stroke="#222" stroke-width="0.6" stroke-linejoin="round" stroke-linecap="round" />
<polyline points="461.00,456.00 461.00,462.20" fill="none" stroke="#1e8a2e" stroke-width="1.0" stroke-linejoin="round" stroke-linecap="round" />
<polyline points="461.00,462.20 467.50,462.20" fill="none" stroke="#b02020" stroke-width="1.0" stroke-linejoin="round" stroke-linecap="round" />
<text x="462.5" y="455.5" font-size="4.2" fill="#2a2a3a">Y</text>
<text x="468.2" y="463" font-size="4.2" fill="#2a2a3a">X</text>
<text x="462.3" y="461.6" font-size="4.2" fill="#2a2a3a">z</text>
</svg>
<svg class="a" style="left:476px;top:36.5px" width="322" height="212" viewBox="476 36.5 322 212" font-family="Liberation Sans,sans-serif">
<polygon points="543.50,92.50 586.90,67.10 590.50,67.10 600.00,72.50 561.30,93.00 561.30,102.30" fill="#575757" stroke="#1c1c1c" stroke-width="0.8" stroke-linejoin="round" />
<polygon points="543.50,92.50 561.30,102.30 561.30,109.50 543.50,99.60" fill="#3e3e3e" stroke="#1c1c1c" stroke-width="0.8" stroke-linejoin="round" />
<ellipse cx="584.5" cy="76.3" rx="6" ry="3.7" fill="#333333" stroke="#1c1c1c" stroke-width="0.6" />
<path d="M579.1 77.8 A6 3.700 0 0 0 590.3 77.1 A6.500 3 0 0 1 579.1 77.8Z" fill="#5c5c5c"/>
<ellipse cx="558.8" cy="91" rx="6" ry="3.7" fill="#333333" stroke="#1c1c1c" stroke-width="0.6" />
<path d="M553.4 92.5 A6 3.700 0 0 0 564.5999999999999 91.8 A6.500 3 0 0 1 553.4 92.5Z" fill="#5c5c5c"/>
<polygon points="561.30,92.50 608.10,64.40 611.00,64.70 623.80,65.60 701.40,112.30 707.00,120.50 659.50,148.80 652.50,139.00 605.00,110.00" fill="#4e4e4e" stroke="#1c1c1c" stroke-width="0.9" stroke-linejoin="round" />
<polygon points="561.30,92.50 608.10,64.40 613.00,66.00 572.50,91.30 580.00,95.00" fill="#545454" stroke="#1c1c1c" stroke-width="0.6" stroke-linejoin="round" />
<polyline points="572.50,91.30 615.00,67.50" fill="none" stroke="#222" stroke-width="1.2" stroke-linejoin="round" stroke-linecap="round" />
<polygon points="579.50,91.50 623.80,67.40 649.20,82.00 604.50,105.50" fill="#4a4a4a" stroke="#1c1c1c" stroke-width="0.6" stroke-linejoin="round" />
<polygon points="584.00,91.30 623.60,69.80 645.50,82.20 605.30,103.50" fill="#464646" stroke="#1c1c1c" stroke-width="0.6" stroke-linejoin="round" />
<polyline points="604.50,105.50 611.00,109.00 655.50,85.50" fill="none" stroke="#1c1c1c" stroke-width="0.5" stroke-linejoin="round" stroke-linecap="round" />
<path d="M627 93.500 Q632 96.500 636.500 93 Q638 91.500 636 89.500" fill="none" stroke="#1c1c1c" stroke-width=".6"/>
<ellipse cx="622.4" cy="106.8" rx="4" ry="2.4" fill="#464646" stroke="#1c1c1c" stroke-width="0.5" />
<ellipse cx="649.9" cy="89.6" rx="3.6" ry="2.2" fill="#464646" stroke="#1c1c1c" stroke-width="0.5" />
<ellipse cx="657.4" cy="110.9" rx="25.4" ry="14.4" fill="#505050" stroke="#1c1c1c" stroke-width="0.6" />
<path d="M632.500 113 A25.400 14.400 0 0 0 682.800 111 A25 11 0 0 1 632.500 113Z" fill="#6a6a6a" opacity=".55"/>
<ellipse cx="657.4" cy="108.6" rx="19.5" ry="10.5" fill="#3c3c3c" stroke="#1c1c1c" stroke-width="0.5" />
<ellipse cx="657.4" cy="108.2" rx="17.2" ry="9" fill="#424242" stroke="#1c1c1c" stroke-width="0.5" />
<polyline points="670.50,116.80 675.50,122.50" fill="none" stroke="#1c1c1c" stroke-width="0.5" stroke-linejoin="round" stroke-linecap="round" />
<path d="M646.400 94.400 V106.500 A10.300 6 0 0 0 667 106.500 V94.400Z" fill="#1e1e1e" stroke="#111" stroke-width=".5"/>
<polyline points="656.80,100.50 656.80,112.30" fill="none" stroke="#3a3a3a" stroke-width="0.7" stroke-linejoin="round" stroke-linecap="round" />
<ellipse cx="656.7" cy="94.4" rx="10.3" ry="6.1" fill="#2e2e2e" stroke="#111" stroke-width="0.5" />
<ellipse cx="657.4" cy="94.6" rx="3.6" ry="2.1" fill="#3a3a3a" stroke="#111" stroke-width="0.5" />
<ellipse cx="658" cy="95.2" rx="1.4" ry="0.9" fill="#1a1a1a" stroke="none" stroke-width="0" />
<polygon points="561.30,92.50 604.00,110.40 653.00,137.50 659.00,148.80 659.30,239.00 560.50,182.50" fill="#474747" stroke="#1c1c1c" stroke-width="0.8" stroke-linejoin="round" />
<polyline points="562.00,93.30 604.00,111.20 652.50,138.50 658.30,149.50" fill="none" stroke="#606060" stroke-width="0.7" stroke-linejoin="round" stroke-linecap="round" />
<polygon points="569.00,187.50 569.00,189.70 571.50,191.20 571.50,189.00" fill="#2c2c2c" stroke="#1c1c1c" stroke-width="0.4" stroke-linejoin="round" />
<polygon points="647.50,232.80 647.50,235.00 650.00,236.50 650.00,234.30" fill="#2c2c2c" stroke="#1c1c1c" stroke-width="0.4" stroke-linejoin="round" />
<polygon points="659.00,148.80 707.00,120.50 708.00,211.50 659.00,239.50" fill="#3a3a3a" stroke="#1c1c1c" stroke-width="0.8" stroke-linejoin="round" />
<polygon points="652.50,139.00 701.40,112.30 707.00,120.50 659.50,148.80" fill="#565656" stroke="#1c1c1c" stroke-width="0.6" stroke-linejoin="round" />
<polyline points="661.00,149.50 661.00,238.00" fill="none" stroke="#2a2a2a" stroke-width="0.5" stroke-linejoin="round" stroke-linecap="round" />
<polygon points="662.00,163.00 708.80,137.50 723.80,147.00 723.80,153.80 680.00,178.00 662.00,167.50" fill="#3e3e3e" stroke="#1c1c1c" stroke-width="0.6" stroke-linejoin="round" />
<polygon points="662.00,163.00 708.80,137.50 723.80,147.00 680.00,170.50" fill="#4c4c4c" stroke="#1c1c1c" stroke-width="0.6" stroke-linejoin="round" />
<polyline points="680.00,170.50 680.00,178.00" fill="none" stroke="#1c1c1c" stroke-width="0.5" stroke-linejoin="round" stroke-linecap="round" />
<ellipse cx="682.1" cy="160.8" rx="7.6" ry="4.6" fill="#303030" stroke="#1c1c1c" stroke-width="0.7" />
<path d="M675.2 162.60000000000002 A7.600 4.600 0 0 0 689.5 161.8 A8 3.400 0 0 1 675.2 162.60000000000002Z" fill="#5c5c5c"/>
<ellipse cx="706.4" cy="146.9" rx="7.6" ry="4.6" fill="#303030" stroke="#1c1c1c" stroke-width="0.7" />
<path d="M699.5 148.70000000000002 A7.600 4.600 0 0 0 713.8 147.9 A8 3.400 0 0 1 699.5 148.70000000000002Z" fill="#5c5c5c"/>
<polygon points="682.40,144.80 682.40,146.60 690.40,155.20 694.40,152.80 694.40,151.20 687.20,144.00" fill="#3a3a3a" stroke="#1c1c1c" stroke-width="0.5" stroke-linejoin="round" />
<polygon points="682.40,144.80 687.20,144.00 694.40,151.20 690.40,153.60" fill="#585858" stroke="#1c1c1c" stroke-width="0.5" stroke-linejoin="round" />
<polygon points="676.20,220.00 691.20,210.60 695.00,215.00 697.50,219.40 697.50,224.00 680.60,232.80 676.20,231.20" fill="#3a3a3a" stroke="#1c1c1c" stroke-width="0.7" stroke-linejoin="round" />
<polygon points="676.20,220.00 691.20,210.60 695.00,215.00 680.60,223.20" fill="#444444" stroke="#1c1c1c" stroke-width="0.6" stroke-linejoin="round" />
<polygon points="676.20,220.00 680.60,223.20 680.60,232.80 676.20,231.20" fill="#4c4c4c" stroke="#1c1c1c" stroke-width="0.6" stroke-linejoin="round" />
<polygon points="682.00,225.00 693.00,218.50 693.00,222.00 684.00,229.00" fill="#1c1c1c" stroke="none" stroke-width="0" stroke-linejoin="round" />
<polyline points="684.30,225.20 705.10,238.10" fill="none" stroke="#141414" stroke-width="2.6" stroke-linejoin="round" stroke-linecap="round" stroke-linecap="butt"/>
<polyline points="687.30,222.60 708.10,235.50" fill="none" stroke="#d41616" stroke-width="2.5" stroke-linejoin="round" stroke-linecap="round" stroke-linecap="butt"/>
<polyline points="690.50,220.20 711.30,233.10" fill="none" stroke="#f2f2f2" stroke-width="2.5" stroke-linejoin="round" stroke-linecap="round" stroke-linecap="butt"/>
<ellipse cx="711.3" cy="233.1" rx="0.9" ry="1.35" fill="#d0d0d0" stroke="#444" stroke-width="0.4" transform="rotate(32 711.300 233.100)"/>
<ellipse cx="708.1" cy="235.5" rx="0.8" ry="1.3" fill="#a01010" stroke="#400" stroke-width="0.3" transform="rotate(32 708.100 235.500)"/>
<polyline points="790.00,233.00 790.00,238.50" fill="none" stroke="#1c2fb0" stroke-width="0.8" stroke-linejoin="round" stroke-linecap="round" />
<polyline points="790.00,238.50 793.50,236.50" fill="none" stroke="#1e8a2e" stroke-width="0.8" stroke-linejoin="round" stroke-linecap="round" />
<polyline points="790.00,238.50 793.00,240.50" fill="none" stroke="#b02020" stroke-width="0.8" stroke-linejoin="round" stroke-linecap="round" />
<text x="790.5" y="232.5" font-size="4.2" fill="#2a2a3a">Z</text>
<text x="794" y="237.5" font-size="4.2" fill="#2a2a3a">Y</text>
<text x="793.5" y="242" font-size="4.2" fill="#2a2a3a">X</text>
</svg>
<svg class="a" style="left:476px;top:260px" width="322" height="211" viewBox="476 260 322 211" font-family="Liberation Sans,sans-serif">
<defs><radialGradient id="scr" cx=".4" cy=".35" r=".7"><stop offset="0" stop-color="#d8d8d8"/><stop offset=".55" stop-color="#8e8e8e"/><stop offset="1" stop-color="#5a5a5a"/></radialGradient></defs>
<polygon points="589.50,309.50 596.50,297.00 603.60,298.20 613.50,306.80 600.00,312.00" fill="#3c3c3c" stroke="#1c1c1c" stroke-width="0.8" stroke-linejoin="round" />
<polyline points="596.50,297.00 598.50,296.50 604.50,297.30 603.60,298.20" fill="none" stroke="#1c1c1c" stroke-width="0.6" stroke-linejoin="round" stroke-linecap="round" />
<ellipse cx="598.8" cy="306.4" rx="3.8" ry="2.6" fill="#585880" stroke="#1c1c1c" stroke-width="0.7" transform="rotate(-30 598.800 306.400)"/>
<polygon points="580.20,311.70 622.50,306.00 705.60,371.40 704.20,374.20 662.00,377.20" fill="#2f2f2f" stroke="#1c1c1c" stroke-width="0.8" stroke-linejoin="round" />
<polyline points="703.00,373.00 662.50,376.00" fill="none" stroke="#4a4a4a" stroke-width="0.6" stroke-linejoin="round" stroke-linecap="round" />
<polygon points="662.00,377.20 704.20,374.20 695.70,377.20 671.00,418.00 669.30,421.00 637.00,421.80" fill="#222222" stroke="#1c1c1c" stroke-width="0.8" stroke-linejoin="round" />
<polygon points="637.00,421.80 669.30,420.80 671.00,418.00 641.00,419.30" fill="#484848" stroke="none" stroke-width="0" stroke-linejoin="round" />
<polygon points="712.70,388.30 714.60,390.20 689.20,431.80 687.20,430.00" fill="#2a2a2a" stroke="#1c1c1c" stroke-width="0.6" stroke-linejoin="round" />
<polygon points="695.70,377.20 712.70,388.30 687.20,430.00 671.00,418.00" fill="#424242" stroke="#1c1c1c" stroke-width="0.8" stroke-linejoin="round" />
<ellipse cx="699.6" cy="391.7" rx="5" ry="4.1" fill="#8383a0" stroke="#1c1c1c" stroke-width="0.8" transform="rotate(-32 699.6 391.7)"/>
<path d="M695.0 393.3 A5 4.100 -32 0 1 702.2 388.0 A6.500 5.500 -32 0 0 695.0 393.3Z" fill="#1e1e1e"/>
<ellipse cx="684.6" cy="415.5" rx="5" ry="4.1" fill="#8a8aa6" stroke="#1c1c1c" stroke-width="0.8" transform="rotate(-32 684.6 415.5)"/>
<path d="M680.0 417.1 A5 4.100 -32 0 1 687.2 411.8 A6.500 5.500 -32 0 0 680.0 417.1Z" fill="#1e1e1e"/>
<polygon points="580.20,311.70 662.00,377.20 637.00,421.80 552.60,357.00" fill="#505050" stroke="#1c1c1c" stroke-width="0.9" stroke-linejoin="round" />
<polyline points="582.00,314.50 658.70,376.30 636.00,418.80" fill="none" stroke="#383838" stroke-width="0.6" stroke-linejoin="round" stroke-linecap="round" />
<polyline points="579.30,315.00 555.50,356.50" fill="none" stroke="#5e5e5e" stroke-width="0.5" stroke-linejoin="round" stroke-linecap="round" />
<polygon points="654.90,392.50 661.00,396.20 652.50,408.00 645.50,409.60" fill="#3e3e3e" stroke="#111" stroke-width="0.6" stroke-linejoin="round" />
<polyline points="654.50,403.60 671.50,414.70" fill="none" stroke="#d41616" stroke-width="1.7" stroke-linejoin="round" stroke-linecap="round" />
<polyline points="653.60,405.10 670.50,416.20" fill="none" stroke="#f0f0f0" stroke-width="1.6" stroke-linejoin="round" stroke-linecap="round" />
<polyline points="652.70,406.60 669.50,417.70" fill="none" stroke="#141414" stroke-width="1.5" stroke-linejoin="round" stroke-linecap="round" />
<circle cx="580.3" cy="319.9" r="4.500" fill="#2c2c2c" stroke="#151515" stroke-width=".6"/>
<circle cx="580.3" cy="319.9" r="3.300" fill="url(#scr)"/>
<circle cx="580.5" cy="320.09999999999997" r="1.300" fill="#2a2a2a"/>
<path d="M577.9 318.9L582.6999999999999 320.9" stroke="#3a3a3a" stroke-width=".6"/>
<circle cx="558.5" cy="354.8" r="4.500" fill="#2c2c2c" stroke="#151515" stroke-width=".6"/>
<circle cx="558.5" cy="354.8" r="3.300" fill="url(#scr)"/>
<circle cx="558.7" cy="355.0" r="1.300" fill="#2a2a2a"/>
<path d="M556.1 353.8L560.9 355.8" stroke="#3a3a3a" stroke-width=".6"/>
<circle cx="653.2" cy="378.9" r="4.500" fill="#2c2c2c" stroke="#151515" stroke-width=".6"/>
<circle cx="653.2" cy="378.9" r="3.300" fill="url(#scr)"/>
<circle cx="653.4000000000001" cy="379.09999999999997" r="1.300" fill="#2a2a2a"/>
<path d="M650.8000000000001 377.9L655.6 379.9" stroke="#3a3a3a" stroke-width=".6"/>
<circle cx="631.9" cy="414.3" r="4.500" fill="#2c2c2c" stroke="#151515" stroke-width=".6"/>
<circle cx="631.9" cy="414.3" r="3.300" fill="url(#scr)"/>
<circle cx="632.1" cy="414.5" r="1.300" fill="#2a2a2a"/>
<path d="M629.5 413.3L634.3 415.3" stroke="#3a3a3a" stroke-width=".6"/>
<polyline points="789.00,463.00 792.50,458.50" fill="none" stroke="#1c2fb0" stroke-width="0.8" stroke-linejoin="round" stroke-linecap="round" />
<polyline points="789.00,463.00 785.50,465.00" fill="none" stroke="#1e8a2e" stroke-width="0.8" stroke-linejoin="round" stroke-linecap="round" />
<polyline points="789.00,463.00 793.00,465.50" fill="none" stroke="#b02020" stroke-width="0.8" stroke-linejoin="round" stroke-linecap="round" />
<text x="792.5" y="458.5" font-size="4.2" fill="#2a2a3a">Z</text>
<text x="783" y="467.5" font-size="4.2" fill="#2a2a3a">Y</text>
<text x="794" y="467.5" font-size="4.2" fill="#2a2a3a">X</text>
</svg></body></html>
